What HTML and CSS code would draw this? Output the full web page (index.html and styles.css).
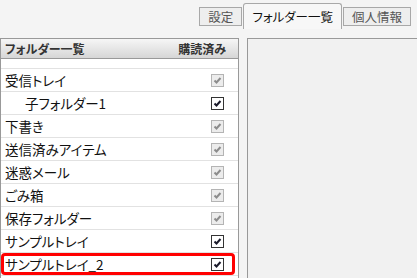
FILE: index.html
```html
<!DOCTYPE html>
<html lang="ja">
<head>
    <meta charset="UTF-8">
    <meta name="viewport" content="width=device-width, initial-scale=1.0">
    <title>フォルダー一覧</title>
    <link rel="stylesheet" href="styles.css">
</head>
<body>
    <div class="tabs">
        <div class="tab">設定</div>
        <div class="tab active">フォルダー一覧</div>
        <div class="tab">個人情報</div>
    </div>
    <div class="main">
        <div class="folder-panel">
            <div class="folder-head">
                <span>フォルダー一覧</span>
                <span>購読済み</span>
            </div>
            <div class="folder-spacer"></div>
            <div class="folder-row">
                <span>受信トレイ</span>
                <span class="check disabled"><svg viewBox="0 0 11 11"><path d="M2.5 5.5 L4.5 7.5 L8.5 3"/></svg></span>
            </div>
            <div class="folder-row child">
                <span>子フォルダー1</span>
                <span class="check"><svg viewBox="0 0 11 11"><path d="M2.5 5.5 L4.5 7.5 L8.5 3"/></svg></span>
            </div>
            <div class="folder-row">
                <span>下書き</span>
                <span class="check disabled"><svg viewBox="0 0 11 11"><path d="M2.5 5.5 L4.5 7.5 L8.5 3"/></svg></span>
            </div>
            <div class="folder-row">
                <span>送信済みアイテム</span>
                <span class="check disabled"><svg viewBox="0 0 11 11"><path d="M2.5 5.5 L4.5 7.5 L8.5 3"/></svg></span>
            </div>
            <div class="folder-row">
                <span>迷惑メール</span>
                <span class="check disabled"><svg viewBox="0 0 11 11"><path d="M2.5 5.5 L4.5 7.5 L8.5 3"/></svg></span>
            </div>
            <div class="folder-row">
                <span>ごみ箱</span>
                <span class="check disabled"><svg viewBox="0 0 11 11"><path d="M2.5 5.5 L4.5 7.5 L8.5 3"/></svg></span>
            </div>
            <div class="folder-row">
                <span>保存フォルダー</span>
                <span class="check disabled"><svg viewBox="0 0 11 11"><path d="M2.5 5.5 L4.5 7.5 L8.5 3"/></svg></span>
            </div>
            <div class="folder-row">
                <span>サンプルトレイ</span>
                <span class="check"><svg viewBox="0 0 11 11"><path d="M2.5 5.5 L4.5 7.5 L8.5 3"/></svg></span>
            </div>
            <div class="folder-row marked">
                <span>サンプルトレイ_2</span>
                <span class="check"><svg viewBox="0 0 11 11"><path d="M2.5 5.5 L4.5 7.5 L8.5 3"/></svg></span>
            </div>
        </div>
        <div class="detail-panel"></div>
    </div>
</body>
</html>
```

FILE: styles.css
```css
body {
    margin: 0;
    background-color: #f4f4f4;
    font-family: "Noto Sans CJK JP", "DejaVu Sans", sans-serif;
    font-feature-settings: "palt";
    color: #111;
    overflow: hidden;
}
.tabs {
    display: flex;
    justify-content: flex-end;
    align-items: flex-end;
    gap: 1px;
    height: 29px;
    padding-right: 6px;
    box-sizing: border-box;
}
.tab {
    height: 19px;
    line-height: 18px;
    padding: 0 8px;
    margin-bottom: 3px;
    font-size: 12.5px;
    font-feature-settings: normal;
    color: #555;
    background-color: #eeeeee;
    border: 1px solid #a8a8a8;
    box-sizing: border-box;
}
.tab.active {
    height: 26px;
    line-height: 25px;
    margin-bottom: 0;
    padding: 0 8px;
    font-feature-settings: "palt";
    color: #111;
    background-color: #f7f7f7;
    border-bottom: none;
    border-radius: 3px 3px 0 0;
}
.main {
    display: flex;
    gap: 8px;
    margin-top: 9px;
}
.folder-panel {
    width: 239px;
    height: calc(100vh - 38px);
    flex-shrink: 0;
    overflow: hidden;
    background-color: white;
    border: 1px solid #999;
    border-bottom: none;
    box-sizing: border-box;
}
.folder-head {
    display: flex;
    justify-content: space-between;
    align-items: center;
    height: 19px;
    padding: 0 12px 0 4px;
    font-size: 12px;
    font-weight: bold;
    color: #333;
    background: linear-gradient(#f6f6f6, #d6d6d6);
    border-bottom: 1px solid #999;
}
.folder-spacer {
    height: 9px;
    border-bottom: 1px solid #e2e2e2;
}
.folder-row {
    position: relative;
    display: flex;
    justify-content: space-between;
    align-items: center;
    height: 22px;
    padding: 0 14px 0 4px;
    font-size: 13.5px;
    border-bottom: 1px solid #e2e2e2;
}
.folder-row.child {
    padding-left: 24px;
}
.folder-row.marked::after {
    content: '';
    position: absolute;
    left: 0;
    top: 0;
    right: 3px;
    bottom: 0;
    border: 3px solid #f00;
    border-radius: 4px;
}
.check {
    display: flex;
    width: 13px;
    height: 13px;
    border: 1px solid #333;
    background-color: white;
    box-sizing: border-box;
}
.check svg {
    width: 11px;
    height: 11px;
    fill: none;
    stroke: #1a1a2a;
    stroke-width: 2;
}
.check.disabled {
    border-color: #b4b4b4;
    background-color: #ececec;
}
.check.disabled svg {
    stroke: #8c8c8c;
}
.detail-panel {
    flex: 1;
    height: calc(100vh - 38px);
    box-sizing: border-box;
    background-color: #f1f1f1;
    border: 1px solid #999;
    border-right: none;
    border-bottom: none;
}
```
